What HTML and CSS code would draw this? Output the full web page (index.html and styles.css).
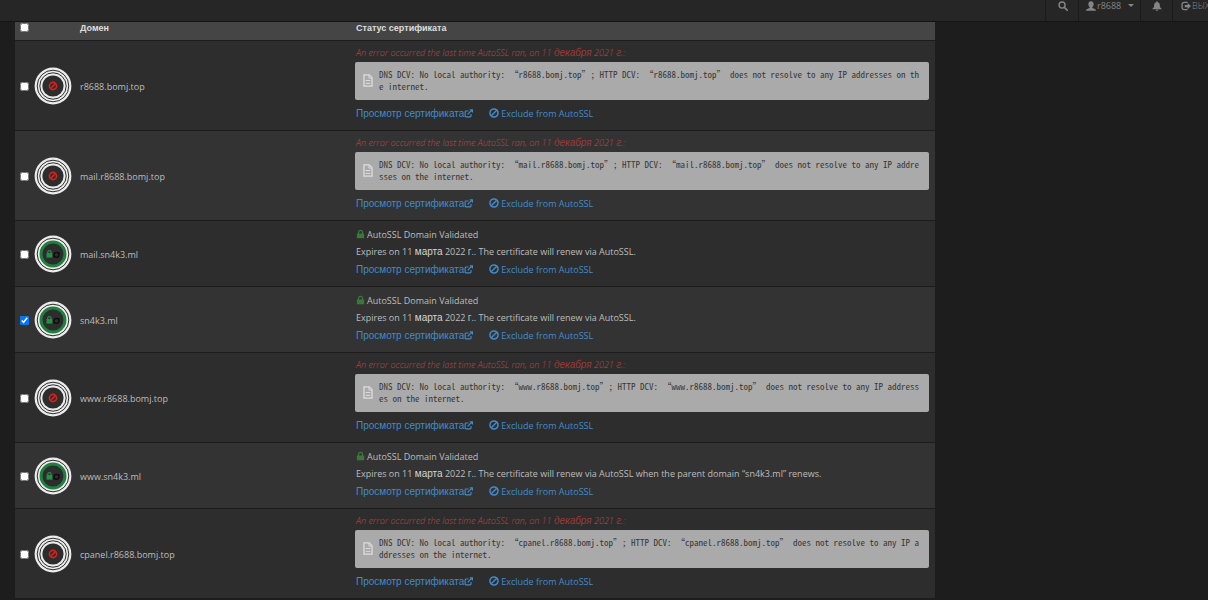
FILE: index.html
```
<!DOCTYPE html>
<html lang="ru">
<head>
<meta charset="utf-8">
<title>SSL/TLS Status</title>
<link rel="stylesheet" href="styles.css">
</head>
<body>
<svg class="sprite" aria-hidden="true">
  <symbol id="search" viewBox="0 0 16 16"><circle cx="6.5" cy="6.5" r="4.8" fill="none" stroke="currentColor" stroke-width="2.2"/><path d="M10.2 10.2L14.8 14.8" stroke="currentColor" stroke-width="2.8" stroke-linecap="round"/></symbol>
  <symbol id="user" viewBox="0 0 16 16"><path fill="currentColor" d="M8 0.5c2.600 0 4.200 1.800 4.200 4.500 0 2-.9 3.800-2.200 4.800v1l4.600 2.200c.9.4 1.400 1 1.400 2.500H0c0-1.500.5-2.100 1.400-2.500L6 10.800v-1C4.700 8.800 3.800 7 3.800 5 3.800 2.300 5.400.5 8 .5z"/></symbol>
  <symbol id="bell" viewBox="0 0 16 16"><path fill="currentColor" d="M8 .5c.8 0 1.300.6 1.300 1.400C11.500 2.500 12.500 4.300 12.500 6.500c0 3 .8 4.600 2.700 5.500v1H.8v-1c1.900-.9 2.700-2.500 2.700-5.500 0-2.200 1-4 3.200-4.600C6.700 1.100 7.200.5 8 .5zM6 13.800h4c0 1.100-.8 1.900-2 1.900s-2-.8-2-1.900z"/></symbol>
  <symbol id="logout" viewBox="0 0 16 16"><path fill="none" stroke="currentColor" stroke-width="2.200" d="M10.500 2.200H5A3.300 3.300 0 0 0 1.700 5.500v5A3.300 3.300 0 0 0 5 13.800h5.500"/><path fill="currentColor" d="M6 6.200h4.500V3L16 8l-5.500 5V9.800H6z"/></symbol>
  <symbol id="ban" viewBox="0 0 16 16"><circle cx="8" cy="8" r="6.500" fill="none" stroke="currentColor" stroke-width="2.400"/><path d="M3.600 12.400L12.400 3.600" stroke="currentColor" stroke-width="2.400"/></symbol>
  <symbol id="external" viewBox="0 0 16 16"><path fill="none" stroke="currentColor" stroke-width="2" d="M8 3.500H3.500A1.500 1.500 0 0 0 2 5v7.500A1.500 1.500 0 0 0 3.500 14H11a1.500 1.500 0 0 0 1.500-1.500V9"/><path stroke="currentColor" stroke-width="2.200" d="M6.500 9.500L13.500 2.500"/><path fill="currentColor" d="M9.500.5H16V7z"/></symbol>
  <symbol id="lock" viewBox="0 0 16 16"><path fill="none" stroke="currentColor" stroke-width="2.200" d="M4.500 8V5a3.500 3.500 0 0 1 7 0v3"/><rect x="1.500" y="7.200" width="13" height="8.300" rx="1" fill="currentColor"/></symbol>
  <symbol id="file" viewBox="0 0 12 16"><path fill="none" stroke="currentColor" stroke-width="1.600" d="M1 1h6.500L11 4.500V15H1z"/><path fill="none" stroke="currentColor" stroke-width="1.200" d="M7.200 1v4H11M3 8h6M3 11.500h6"/></symbol>
  <symbol id="badge-error" viewBox="0 0 38 38">
    <circle cx="19" cy="19" r="18.400" fill="#ececec"/>
    <g fill="none" stroke="#2d2d2d" stroke-width="1"><circle cx="19" cy="19" r="15.800"/><circle cx="19" cy="19" r="13.200"/></g>
    <circle cx="19" cy="19" r="10.600" fill="#2d2d2d"/>
    <g fill="none" stroke="#d9201a" stroke-width="1.600"><circle cx="19" cy="19" r="3.600"/><path d="M16.500 21.500l5-5"/></g>
  </symbol>
  <symbol id="badge-ok" viewBox="0 0 38 38">
    <circle cx="19" cy="19" r="18.400" fill="#ececec"/>
    <circle cx="19" cy="19" r="15.800" fill="none" stroke="#2d2d2d" stroke-width="1"/>
    <circle cx="19" cy="19" r="12" fill="#2d2d2d" stroke="#1f7f3d" stroke-width="3"/>
    <path d="M13.700 18.500v-1.200a1.700 1.700 0 0 1 3.400 0v1.200" fill="none" stroke="#239046" stroke-width="1.200"/>
    <rect x="12.500" y="18" width="5.800" height="4.600" fill="#239046"/>
    <circle cx="22.500" cy="19.800" r="2.500" fill="none" stroke="#0c0c0c" stroke-width="1.300"/>
    <path d="M24 17.300h1.600v1.800zM21 22.300h-1.600v-1.800z" fill="#0c0c0c"/>
  </symbol>
</svg>

<nav class="navbar">
  <button class="nav-item nav-search" aria-label="Search"><svg class="icon-nav"><use href="#search"/></svg></button>
  <button class="nav-item nav-user"><svg class="icon-nav"><use href="#user"/></svg>r8688<span class="caret"></span></button>
  <button class="nav-item nav-bell" aria-label="Notifications"><svg class="icon-nav"><use href="#bell"/></svg></button>
  <a class="nav-item nav-logout" href="#"><svg class="icon-nav"><use href="#logout"/></svg>ВЫХ</a>
</nav>

<main class="content">
<table class="domains">
  <thead>
    <tr><th class="col-check"><input type="checkbox" aria-label="Все домены"></th><th class="col-icon"></th><th class="col-domain">Домен</th><th>Статус сертификата</th></tr>
  </thead>
  <tbody>
    <tr>
      <td><input type="checkbox" id="d1"></td><td><svg class="badge"><use href="#badge-error"/></svg></td><td><label for="d1">r8688.bomj.top</label></td>
      <td>
        <p class="error">An error occurred the last time AutoSSL ran, on 11 <span class="cyr">декабря</span> 2021 <span class="cyr">г</span>.:</p>
        <div class="report"><svg class="icon-file"><use href="#file"/></svg><code>DNS DCV: No local authority: “r8688.bomj.top”; HTTP DCV: “r8688.bomj.top” does not resolve to any IP addresses on th<br>e internet.</code></div>
        <div class="actions"><a class="cyr" href="#">Просмотр сертификата<svg class="icon-link"><use href="#external"/></svg></a><a href="#"><svg class="icon-ban"><use href="#ban"/></svg>Exclude from AutoSSL</a></div>
      </td>
    </tr>
    <tr>
      <td><input type="checkbox" id="d2"></td><td><svg class="badge"><use href="#badge-error"/></svg></td><td><label for="d2">mail.r8688.bomj.top</label></td>
      <td>
        <p class="error">An error occurred the last time AutoSSL ran, on 11 <span class="cyr">декабря</span> 2021 <span class="cyr">г</span>.:</p>
        <div class="report"><svg class="icon-file"><use href="#file"/></svg><code>DNS DCV: No local authority: “mail.r8688.bomj.top”; HTTP DCV: “mail.r8688.bomj.top” does not resolve to any IP addre<br>sses on the internet.</code></div>
        <div class="actions"><a class="cyr" href="#">Просмотр сертификата<svg class="icon-link"><use href="#external"/></svg></a><a href="#"><svg class="icon-ban"><use href="#ban"/></svg>Exclude from AutoSSL</a></div>
      </td>
    </tr>
    <tr>
      <td><input type="checkbox" id="d3"></td><td><svg class="badge"><use href="#badge-ok"/></svg></td><td><label for="d3">mail.sn4k3.ml</label></td>
      <td>
        <p class="valid"><svg class="icon-lock"><use href="#lock"/></svg>AutoSSL Domain Validated</p>
        <p>Expires on 11 <span class="cyr month">марта</span> 2022 <span class="cyr">г</span>.. The certificate will renew via AutoSSL.</p>
        <div class="actions"><a class="cyr" href="#">Просмотр сертификата<svg class="icon-link"><use href="#external"/></svg></a><a href="#"><svg class="icon-ban"><use href="#ban"/></svg>Exclude from AutoSSL</a></div>
      </td>
    </tr>
    <tr>
      <td><input type="checkbox" id="d4" checked></td><td><svg class="badge"><use href="#badge-ok"/></svg></td><td><label for="d4">sn4k3.ml</label></td>
      <td>
        <p class="valid"><svg class="icon-lock"><use href="#lock"/></svg>AutoSSL Domain Validated</p>
        <p>Expires on 11 <span class="cyr month">марта</span> 2022 <span class="cyr">г</span>.. The certificate will renew via AutoSSL.</p>
        <div class="actions"><a class="cyr" href="#">Просмотр сертификата<svg class="icon-link"><use href="#external"/></svg></a><a href="#"><svg class="icon-ban"><use href="#ban"/></svg>Exclude from AutoSSL</a></div>
      </td>
    </tr>
    <tr>
      <td><input type="checkbox" id="d5"></td><td><svg class="badge"><use href="#badge-error"/></svg></td><td><label for="d5">www.r8688.bomj.top</label></td>
      <td>
        <p class="error">An error occurred the last time AutoSSL ran, on 11 <span class="cyr">декабря</span> 2021 <span class="cyr">г</span>.:</p>
        <div class="report"><svg class="icon-file"><use href="#file"/></svg><code>DNS DCV: No local authority: “www.r8688.bomj.top”; HTTP DCV: “www.r8688.bomj.top” does not resolve to any IP address<br>es on the internet.</code></div>
        <div class="actions"><a class="cyr" href="#">Просмотр сертификата<svg class="icon-link"><use href="#external"/></svg></a><a href="#"><svg class="icon-ban"><use href="#ban"/></svg>Exclude from AutoSSL</a></div>
      </td>
    </tr>
    <tr>
      <td><input type="checkbox" id="d6"></td><td><svg class="badge"><use href="#badge-ok"/></svg></td><td><label for="d6">www.sn4k3.ml</label></td>
      <td>
        <p class="valid"><svg class="icon-lock"><use href="#lock"/></svg>AutoSSL Domain Validated</p>
        <p>Expires on 11 <span class="cyr month">марта</span> 2022 <span class="cyr">г</span>.. The certificate will renew via AutoSSL when the parent domain “sn4k3.ml” renews.</p>
        <div class="actions"><a class="cyr" href="#">Просмотр сертификата<svg class="icon-link"><use href="#external"/></svg></a><a href="#"><svg class="icon-ban"><use href="#ban"/></svg>Exclude from AutoSSL</a></div>
      </td>
    </tr>
    <tr>
      <td><input type="checkbox" id="d7"></td><td><svg class="badge"><use href="#badge-error"/></svg></td><td><label for="d7">cpanel.r8688.bomj.top</label></td>
      <td>
        <p class="error">An error occurred the last time AutoSSL ran, on 11 <span class="cyr">декабря</span> 2021 <span class="cyr">г</span>.:</p>
        <div class="report"><svg class="icon-file"><use href="#file"/></svg><code>DNS DCV: No local authority: “cpanel.r8688.bomj.top”; HTTP DCV: “cpanel.r8688.bomj.top” does not resolve to any IP a<br>ddresses on the internet.</code></div>
        <div class="actions"><a class="cyr" href="#">Просмотр сертификата<svg class="icon-link"><use href="#external"/></svg></a><a href="#"><svg class="icon-ban"><use href="#ban"/></svg>Exclude from AutoSSL</a></div>
      </td>
    </tr>
  </tbody>
</table>
</main>
</body>
</html>
```
FILE: styles.css
```
* { box-sizing: border-box; }

body {
  margin: 0;
  background: #1d1d1d;
  color: #bdbdbd;
  font: 400 9px "Open Sans", sans-serif;
  overflow-x: hidden;
}

.sprite { display: none; }

svg { flex: none; }

p { margin: 0; line-height: 17px; }

.navbar {
  display: flex;
  justify-content: flex-end;
  height: 22px;
  background: #262626;
  border-bottom: 1px solid #141414;
}

.nav-item {
  display: flex;
  align-items: center;
  gap: 1px;
  padding: 0 8px 10px;
  border: 0;
  border-left: 1px solid #1b1b1b;
  background: none;
  color: #858585;
  font: 400 9px "Open Sans", sans-serif;
  text-decoration: none;
  white-space: nowrap;
}

.nav-search { width: 33px; padding-left: 12px; }
.nav-user { width: 62px; padding-left: 7px; }
.nav-bell { width: 32px; padding-left: 11px; }
.nav-logout { width: 36px; padding-right: 0; font-weight: 300; }

.icon-nav { width: 10px; height: 10px; }

.caret {
  margin-left: 6px;
  border: 3px solid transparent;
  border-top-color: currentColor;
  border-bottom: 0;
}

.content { padding: 0 15px; }

.domains {
  width: 100%;
  max-width: 920px;
  border-collapse: collapse;
  table-layout: fixed;
}

.domains th {
  height: 18px;
  padding: 0 0 6px;
  background: #454545;
  border-bottom: 1px solid #1c1c1c;
  color: #dedede;
  font: 700 9px/10px "Liberation Sans", sans-serif;
  text-align: left;
}

.domains th:last-child { padding-left: 1px; }

.domains td {
  padding: 4px 0 8px;
  background: #2d2d2d;
  border-bottom: 1px solid #1c1c1c;
  vertical-align: middle;
}

.domains tr:nth-child(even) td { background: #333; }

.col-check { width: 19px; }
.col-icon { width: 46px; }
.col-domain { width: 275px; }

.domains td:last-child { padding-right: 6px; }

input[type="checkbox"] {
  display: block;
  width: 9px;
  height: 9px;
  margin: 0 0 0 5px;
}

.badge { display: block; width: 38px; height: 38px; }

.domains td:nth-child(-n+3) { padding: 2px 0 0; }

.domains td > p,
.actions { padding-left: 1px; }

.error {
  margin-bottom: 2px;
  color: #b94a48;
  font-style: italic;
  font-weight: 300;
  line-height: 15px;
}

.error .cyr { color: #963c3b; }

.report {
  display: flex;
  align-items: center;
  gap: 6px;
  margin-bottom: 5px;
  padding: 7px 8px;
  border-radius: 2px;
  background: #aaa;
  color: #383838;
}

.report code {
  font: 9px/12px "Noto Sans Mono CJK SC", monospace;
  white-space: nowrap;
}

.icon-file { width: 10px; height: 13px; color: #ddd; }

.valid {
  display: flex;
  align-items: center;
  gap: 2px;
  padding-top: 1px;
}

.valid + p { margin-bottom: 1px; }

.icon-lock { width: 9px; height: 10px; color: #3c763d; }

.cyr { font-family: "Liberation Sans", sans-serif; font-size: 10px; }

.month { color: #d4d4d4; }

.actions { display: flex; gap: 16px; line-height: 17px; }

.actions a {
  display: flex;
  align-items: center;
  gap: 2px;
  color: #428bca;
  text-decoration: none;
}

.actions .cyr { gap: 0; }

.icon-link { width: 9px; height: 9px; }
.icon-ban { width: 10px; height: 10px; }
```
